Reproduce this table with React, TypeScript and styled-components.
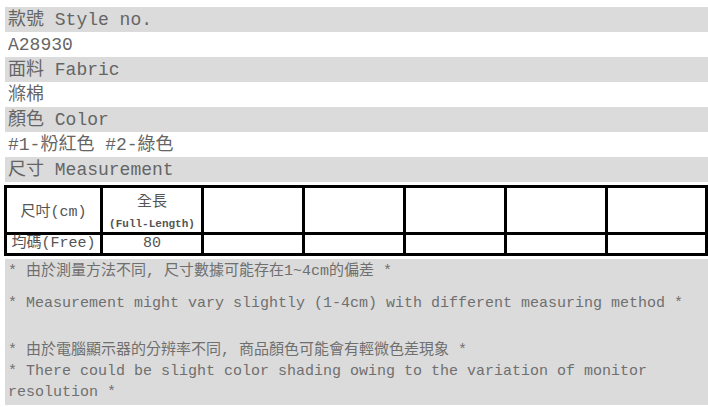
import styled, { createGlobalStyle } from "styled-components";

const GlobalStyle = createGlobalStyle`
  html, body {
    margin: 0;
    padding: 0;
    background: #ffffff;
  }
  body {
    font-family: "Liberation Mono", "Noto Sans CJK TC", monospace;
  }
`;

const Page = styled.div`
  width: 703px;
  padding: 7px 0 0 5px;
  display: flex;
  flex-direction: column;
`;

const InfoRow = styled.div<{ $shaded?: boolean }>`
  height: 25px;
  line-height: 26px;
  padding-left: 3px;
  font-size: 18px;
  color: #656565;
  background: ${(p) => (p.$shaded ? "#dbdbdb" : "#ffffff")};
  white-space: nowrap;
`;

const SizeTable = styled.table`
  margin: 3px 0 0 -1px;
  width: 701px;
  border-collapse: collapse;
  table-layout: fixed;
  border: 3px solid #000;

  td {
    border: 3px solid #000;
    padding: 0;
    text-align: center;
    color: #555;
    font-size: 15px;
    white-space: nowrap;
  }
`;

const HeadRow = styled.tr`
  height: 47px;
`;

const BodyRow = styled.tr`
  height: 20px;

  td {
    font-size: 15px;
    line-height: 18px;
  }
`;

const Small = styled.div`
  font-size: 11px;
  font-weight: bold;
  line-height: 14px;
  margin-top: 6px;
`;

const Notes = styled.div`
  margin-top: 3px;
  background: #dbdbdb;
  padding: 2px 0 2px 3px;
  color: #6f6f6f;
  font-size: 15px;
`;

const NoteLine = styled.div<{ $gap?: number }>`
  line-height: 21px;
  margin-top: ${(p) => p.$gap ?? 0}px;
`;

const widths = [96, 101, 101, 101, 101, 101, 100];

export default function App() {
  return (
    <>
      <GlobalStyle />
      <Page>
        <InfoRow $shaded>款號 Style no.</InfoRow>
        <InfoRow>A28930</InfoRow>
        <InfoRow $shaded>面料 Fabric</InfoRow>
        <InfoRow>滌棉</InfoRow>
        <InfoRow $shaded>顏色 Color</InfoRow>
        <InfoRow>#1-粉紅色 #2-綠色</InfoRow>
        <InfoRow $shaded>尺寸 Measurement</InfoRow>
        <SizeTable>
          <colgroup>
            {widths.map((w, i) => (
              <col key={i} style={{ width: w }} />
            ))}
          </colgroup>
          <tbody>
            <HeadRow>
              <td>尺吋(cm)</td>
              <td>
                全長
                <Small>(Full-Length)</Small>
              </td>
              <td />
              <td />
              <td />
              <td />
              <td />
            </HeadRow>
            <BodyRow>
              <td>均碼(Free)</td>
              <td>80</td>
              <td />
              <td />
              <td />
              <td />
              <td />
            </BodyRow>
          </tbody>
        </SizeTable>
        <Notes>
          <NoteLine>* 由於測量方法不同, 尺寸數據可能存在1~4cm的偏差 *</NoteLine>
          <NoteLine $gap={11}>
            * Measurement might vary slightly (1-4cm) with different measuring method *
          </NoteLine>
          <NoteLine $gap={26}>* 由於電腦顯示器的分辨率不同, 商品顏色可能會有輕微色差現象 *</NoteLine>
          <NoteLine>
            * There could be slight color shading owing to the variation of monitor resolution *
          </NoteLine>
        </Notes>
      </Page>
    </>
  );
}
